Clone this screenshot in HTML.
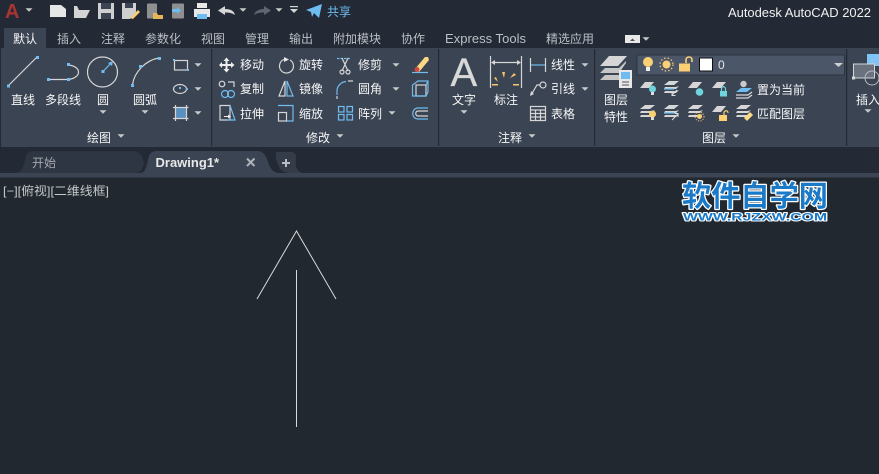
<!DOCTYPE html>
<html><head><meta charset="utf-8"><style>
html,body{margin:0;padding:0;background:#212830;width:879px;height:474px;overflow:hidden}
svg{display:block;position:absolute;left:0;top:0}
text{font-family:"Liberation Sans","Noto Sans CJK SC",sans-serif;font-size:12px;fill:#f6f6f6;stroke:currentColor;stroke-width:0}
.m{fill:#bcbfc5}
.g{stroke:#d6d6d6;fill:none;stroke-width:1.2}
.b{stroke:#6fbcf0;fill:none;stroke-width:1.2}
.s{fill:#6fbcf0}
</style></head><body>
<svg width="879" height="474" viewBox="0 0 879 474" xmlns="http://www.w3.org/2000/svg">
<defs>
<path id="car" d="M-3.500 -1.800H3.500L0 1.800Z" fill="#c9c9c9"/>
<g id="lay"><path d="M0 6L5 0H14L9 6Z" fill="#d6d6d6"/></g>
<g id="lay3"><path d="M0 4L5 0H15L10 4Z M0 8H12L15 5L12 6H1Z M0 12H12L15 9L12 10H1Z" fill="#d6d6d6"/></g>
</defs>
<!-- backgrounds -->
<rect width="879" height="147" fill="#232a35"/>
<rect y="48" width="879" height="99" fill="#3b4453"/>
<rect x="4" y="28" width="42" height="20" fill="#3b4453"/>
<rect y="147" width="879" height="26" fill="#232a35"/>
<rect y="173" width="879" height="4.500" fill="#3b4453"/>
<rect y="177.500" width="879" height="297" fill="#212830"/>
<rect y="48" width="1" height="99" fill="#232a35"/>
<g fill="#232a35"><rect x="211" y="49" width="1.200" height="97"/><rect x="438" y="49" width="1.200" height="97"/><rect x="594" y="49" width="1.200" height="97"/><rect x="846" y="49" width="1.200" height="97"/></g>

<!-- QAT -->
<text x="5" y="18" style="font-size:20px;font-weight:bold;fill:#a83434">A</text>
<use href="#car" x="29" y="10"/>
<path d="M50 5H61L66 9V17H50Z" fill="#e6e6e6"/>
<path d="M74 7V18H86L90 10H79L77 6H74Z" fill="#d4d4d4"/>
<path d="M98 3H114V19H98Z" fill="#cfcfcf"/><rect x="101" y="3" width="10" height="6" fill="#3b4453"/><rect x="101" y="13" width="10" height="6" fill="#3b4453"/>
<path d="M122 3H136V12L130 19H122Z" fill="#cfcfcf"/><rect x="125" y="3" width="8" height="5" fill="#3b4453"/><path d="M130 18L138 10L140 12L133 19Z" fill="#fbcf74"/>
<rect x="147" y="3.500" width="10" height="15" rx="1" fill="#8f8f8f"/><path d="M153 13H157L158 15H163V19H153Z" fill="#e6b65a"/>
<rect x="172" y="3.500" width="12" height="15" rx="1" fill="#8f8f8f"/><path d="M172 9H177V7L181 10.500L177 14V12H172Z" fill="#6fbcf0"/>
<path d="M194 9H210V17H194Z" fill="#e8e8e8"/><rect x="197" y="3" width="10" height="5" fill="#e8e8e8"/><rect x="197" y="14" width="10" height="5" fill="#6fbcf0"/>
<path d="M218 10.500L225 6V9C231 9 234 11 235 15C232 13 229 12.500 225 12.500V15Z" fill="#d6d6d6"/>
<use href="#car" x="243" y="10"/>
<path d="M271 10.500L264 6V9C259 9 255 11 254 15C257 13 260 12.500 264 12.500V15Z" fill="#5f6670"/>
<use href="#car" x="279" y="10"/>
<rect x="290" y="6" width="8" height="1.200" fill="#d6d6d6"/><path d="M290 9H298L294 13Z" fill="#d6d6d6"/>
<path d="M306 10L322 4L319 18L314 13L312 17L311 12Z" fill="#6fbcf0"/>
<text x="327" y="16" style="fill:#6fbcf0">共享</text>
<text x="728" y="17" textLength="143" lengthAdjust="spacing" style="font-size:13px;fill:#f0f0f0">Autodesk AutoCAD 2022</text>

<!-- ribbon tabs -->
<text x="13" y="43">默认</text>
<text class="m" x="57" y="43">插入</text><text class="m" x="101" y="43">注释</text><text class="m" x="145" y="43">参数化</text><text class="m" x="201" y="43">视图</text><text class="m" x="245" y="43">管理</text><text class="m" x="289" y="43">输出</text><text class="m" x="333" y="43">附加模块</text><text class="m" x="401" y="43">协作</text><text class="m" x="445" y="43" textLength="81" lengthAdjust="spacing" style="font-size:13px">Express Tools</text><text class="m" x="546" y="43">精选应用</text>
<rect x="625" y="35" width="15" height="8" fill="#e8e8e8"/><path d="M630 41H635L632.500 38.500Z" fill="#555"/><use href="#car" x="646" y="39"/>

<!-- draw panel -->
<path class="g" d="M8 86L37 57"/><rect x="7" y="84.500" width="3" height="3" class="s"/><rect x="36" y="56" width="3" height="3" class="s"/>
<text x="11" y="104">直线</text>
<path class="g" d="M49 79.500H68M68 65C82 66 82 78 68 79.500"/><rect x="47" y="78" width="3" height="3" class="s"/><rect x="67" y="78" width="3" height="3" class="s"/><rect x="67" y="63" width="3" height="3" class="s"/>
<text x="45" y="104">多段线</text>
<circle class="g" cx="102.500" cy="72" r="15"/><path class="b" d="M103 71.500L112 62" stroke-width="1.500"/><path class="s" d="M113 61L112 66L108 63Z"/><rect x="101.500" y="70" width="3" height="3" class="s"/>
<text x="97" y="104">圆</text><use href="#car" x="103" y="112"/>
<path class="g" d="M132.500 85C134 72 146 60 159 58"/><rect x="131" y="84" width="3" height="3" class="s"/><rect x="139" y="65" width="3" height="3" class="s"/><rect x="158" y="57" width="3" height="3" class="s"/>
<text x="133" y="104">圆弧</text><use href="#car" x="145" y="112"/>
<rect class="g" x="174.500" y="60.500" width="13" height="9.500"/><rect x="173" y="59" width="2" height="2" class="s"/><rect x="187" y="69" width="2" height="2" class="s"/><use href="#car" x="198" y="65"/>
<ellipse class="g" cx="180" cy="89" rx="6.500" ry="4.500"/><rect x="179" y="87" width="2" height="2" class="s"/><rect x="186" y="88" width="2" height="2" class="s"/><use href="#car" x="198" y="89"/>
<rect x="176" y="108" width="10" height="10" fill="#5b8fbd"/><path class="g" d="M173 107.500H188.500M173 118.500H188.500M175.500 105V121M186.500 105V121"/><use href="#car" x="198" y="113"/>
<text x="87" y="142">绘图</text><use href="#car" x="121" y="136"/>

<!-- modify panel -->
<path d="M226.500 57.500L229.500 61H227.500V64H231V62L234.500 65L231 68V66H227.500V69H229.500L226.500 72.500L223.500 69H225.500V66H222V68L219 65L222 62V64H225.500V61H223.500Z" fill="#eee"/>
<text x="240" y="69">移动</text>
<path class="g" d="M290 60A7 7 0 1 1 284 59.500"/><path d="M284 57L289 59.500L284 62Z" fill="#e6e6e6"/>
<text x="299" y="69">旋转</text>
<path class="b" d="M337 58.500H351" stroke-dasharray="2.500 1"/><path class="g" d="M342 58L348 71M348 58L342 71"/><circle class="g" cx="342" cy="72" r="2"/><circle class="g" cx="348" cy="72" r="2"/>
<text x="358" y="69">修剪</text><use href="#car" x="396" y="65"/>
<path d="M415 69L425 57H428L429 60L419 72Z" fill="#fbd884"/><circle cx="417" cy="69.500" r="2.500" fill="#d04848"/><path class="b" d="M412 72.500H428"/>

<circle class="g" cx="222" cy="84" r="2.800"/><path class="g" d="M228 82H234V87"/><circle class="b" cx="225" cy="94" r="3.500"/><circle class="b" cx="231" cy="94" r="3.500"/>
<text x="240" y="93">复制</text>
<path class="g" d="M279 96L285 81V96Z"/><path class="b" d="M287 81L293 96H287Z"/>
<text x="299" y="93">镜像</text>
<path class="b" d="M337 95V91C337 86 341 82 346 81.500"/><path class="g" d="M348 81H353M337 99V96"/>
<text x="358" y="93">圆角</text><use href="#car" x="396" y="89"/>
<rect class="g" x="416" y="85" width="10" height="11"/><path class="b" d="M412.500 85L418 81H428V92L426 96H412.500ZM426 85L428 81"/>

<path class="g" d="M220 105.500H230V120H220Z"/><path class="b" d="M230 105.500L235 120H227"/><path d="M224 116H228V114.500L231 116.500L228 118.500V117H224Z" fill="#eee"/>
<text x="240" y="118">拉伸</text>
<path class="b" d="M278 105.500H293V121H286"/><rect class="g" x="278.500" y="112.500" width="8" height="8.500"/>
<text x="299" y="118">缩放</text>
<g class="b"><rect x="338.500" y="106.500" width="5.500" height="5.500"/><rect x="347" y="106.500" width="5.500" height="5.500"/><rect x="338.500" y="114.500" width="5.500" height="5.500"/><rect x="347" y="114.500" width="5.500" height="5.500"/></g>
<text x="358" y="118">阵列</text><use href="#car" x="392" y="113"/>
<path class="b" d="M428 108H418C411 108 411 119 418 119H428"/><path class="g" d="M428 111H418C415 111 415 116 418 116H428"/>
<text x="306" y="142">修改</text><use href="#car" x="340" y="136"/>

<!-- annotation panel -->
<text x="450.500" y="86" style="font-size:40px;fill:#d8d8d8;stroke:#d8d8d8;stroke-width:.3px">A</text>
<text x="452" y="104">文字</text><use href="#car" x="464" y="112"/>
<path class="g" d="M490.500 56V88M521.500 56V88M492 62.500H520"/><path d="M491 62.500L495 60V65ZM521 62.500L517 60V65Z" fill="#d6d6d6"/>
<path d="M504 78L502 72H505ZM498 82L494 78L496 77ZM510 78L514 73L516 75ZM492 84H498V85.500H492ZM513 84H519V85.500H513Z" fill="#f5c66a"/>
<text x="494" y="104">标注</text>
<path class="g" d="M530.500 58V72M545.500 58V72"/><path class="b" d="M531 65H545"/>
<text x="551" y="69">线性</text><use href="#car" x="585" y="65"/>
<circle class="g" cx="543" cy="85" r="3"/><path class="g" d="M540 85H537L531 95"/><path d="M530 96L531 91L534 94Z" fill="#d6d6d6"/>
<text x="551" y="93">引线</text><use href="#car" x="585" y="89"/>
<path class="g" d="M530.500 106.500H545.500V120.500H530.500ZM530.500 110H545.500M530.500 113.500H545.500M530.500 117H545.500M535.500 110V120.500M540.500 110V120.500"/>
<text x="551" y="118">表格</text>
<text x="498" y="142">注释</text><use href="#car" x="532" y="136"/>

<!-- layer panel -->
<path d="M600 66L609 56H627L618 66Z" fill="#d6d6d6"/>
<path d="M600 73L605 68H619L626 61V63L619 73Z" fill="#c6c6c6"/>
<path d="M600 80L605 75H619V80Z" fill="#c6c6c6"/>
<rect x="619" y="70" width="13" height="18" fill="#e8e8e8"/><rect x="621" y="72" width="9" height="7" fill="#6fbcf0"/><path d="M622 82H629M622 85H629" stroke="#555" stroke-width="1"/>
<text x="604" y="104">图层</text><text x="604" y="121">特性</text>
<rect x="637" y="55" width="207.500" height="20" fill="#4c5669" stroke="#2c3440" stroke-width="1"/>
<circle cx="648" cy="62" r="5" fill="#fbcf74"/><rect x="646" y="67" width="4" height="4" fill="#eee"/>
<circle cx="666.500" cy="64.500" r="4" fill="#fbcf74"/><circle cx="666.500" cy="64.500" r="6.500" fill="none" stroke="#fbcf74" stroke-width="1.200" stroke-dasharray="1.500 2"/>
<rect x="679" y="63.500" width="11" height="8" fill="#fbcf74"/><path d="M686 63V60C686 56 692 56 692 60V62" fill="none" stroke="#fbcf74" stroke-width="1.600"/>
<rect x="699.500" y="58" width="13" height="13" fill="#fff" stroke="#111"/>
<text x="718" y="69" style="fill:#e4e4e4">0</text>
<path d="M834 63H843L838.500 67Z" fill="#cfcfcf"/>
<use href="#lay" x="640" y="82"/><circle cx="652.500" cy="89" r="3.500" fill="#6ed4dd"/><rect x="651" y="92" width="3" height="3" fill="#ddd"/>
<use href="#lay3" x="664" y="81"/><path d="M664 89H674" stroke="#6fbcf0" stroke-width="1.300"/><path d="M677 90L672 95M672 92V95.500H675.500" stroke="#ddd" fill="none"/>
<use href="#lay" x="688" y="82"/><circle cx="699.500" cy="92" r="3.800" fill="#6ed4dd"/>
<use href="#lay" x="712" y="82"/><rect x="720" y="91" width="7" height="5.500" fill="#6ed4dd"/><path d="M721.500 91V89C721.500 86 725.500 86 725.500 89V91" stroke="#6ed4dd" fill="none" stroke-width="1.200"/>
<circle cx="743.500" cy="84" r="3.200" fill="#c9c9c9"/><path d="M736 92L741 88H752L747 92Z" fill="#6fbcf0"/><path d="M736 95H748L752 92M736 98H748L752 95" stroke="#d6d6d6" fill="none" stroke-width="1.300"/>
<text x="757" y="94">置为当前</text>
<use href="#lay3" x="640" y="105"/><circle cx="652.500" cy="114" r="3.500" fill="#fbcf74"/><rect x="651" y="117" width="3" height="3" fill="#ddd"/>
<use href="#lay3" x="664" y="105"/><path d="M664 113H674" stroke="#6fbcf0" stroke-width="1.300"/><path d="M672 120L678 114M674.500 113.500H678V117" stroke="#ddd" fill="none"/>
<use href="#lay3" x="688" y="105"/><circle cx="699.500" cy="116.500" r="2.500" fill="#fbcf74"/><circle cx="699.500" cy="116.500" r="4.500" fill="none" stroke="#fbcf74" stroke-dasharray="1 1.500"/>
<use href="#lay" x="712" y="106"/><rect x="719" y="115" width="8" height="6" fill="#fbcf74"/><path d="M724 115V113C724 110 728 110 728 113" stroke="#fbcf74" fill="none" stroke-width="1.200"/>
<use href="#lay3" x="736" y="105"/><path d="M744 118L750 112L753 115L747 121Z" fill="#fbd884"/>
<text x="757" y="118">匹配图层</text>
<text x="702" y="142">图层</text><use href="#car" x="736" y="136"/>

<!-- insert -->
<rect x="867" y="54" width="12" height="12" fill="#7fc4f5"/>
<rect x="853.500" y="64" width="21" height="14" fill="#6a7280" stroke="#d6d6d6"/><rect x="852" y="76.500" width="3" height="3" fill="#d6d6d6"/><circle cx="872" cy="78" r="7" fill="none" stroke="#b9bcc2"/>
<text x="856" y="104">插入</text><use href="#car" x="868" y="111"/>

<!-- doc tabs -->
<path d="M14 173C20 173 23 170 25 160C26 154 28 151 34 151H132C139 151 143 156 144 163C143 169 141 172 136 173Z" fill="#2e3643"/>
<path d="M140 173C144 173 146 170 148 160C149 154 151 151 157 151H257C263 151 266 155 268 162C270 169 273 172 278 173Z" fill="#3b4453"/>
<path d="M276 152H291C295 152 297 155 296 160C295 167 297 171 302 173H288C281 172 277 166 276 157Z" fill="#343c4a"/>
<text x="32" y="167" style="fill:#a6a9ae">开始</text>
<text x="155.500" y="167" style="font-weight:bold;font-size:13px;fill:#e8e8e8">Drawing1*</text>
<path d="M247 158.500L254.500 166M254.500 158.500L247 166" stroke="#b0b3b8" stroke-width="2"/>
<path d="M282 163H290M286 159V167" stroke="#b9bcc2" stroke-width="2"/>

<!-- canvas -->
<text x="3" y="195" textLength="106" lengthAdjust="spacingAndGlyphs" style="fill:#c6c8ca">[−][俯视][二维线框]</text>
<path d="M257 299L296.500 231L336 299M296.500 270V427" stroke="#d9d9d9" stroke-width="1" fill="none"/>

<!-- watermark -->
<text x="682" y="206" textLength="146" lengthAdjust="spacingAndGlyphs" style="font-size:29px;font-weight:bold;fill:#1a7ac8;stroke:#fff;stroke-width:2.500px;paint-order:stroke;stroke-linejoin:round">软件自学网</text>
<text x="683" y="220.500" textLength="144" lengthAdjust="spacingAndGlyphs" style="font-size:11px;font-weight:bold;fill:#1a7ac8;stroke:#fff;stroke-width:2px;paint-order:stroke;stroke-linejoin:round">WWW.RJZXW.COM</text>
</svg>
</body></html>
